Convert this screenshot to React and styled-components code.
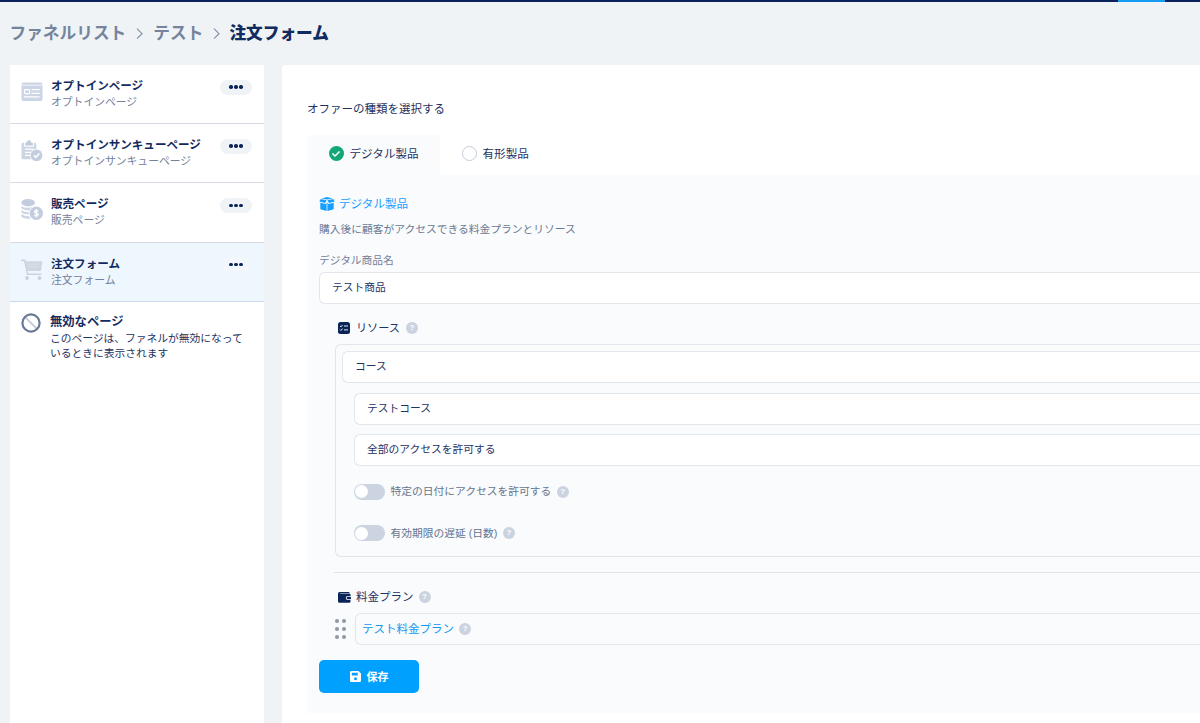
import React from 'react';
import styled, { createGlobalStyle } from 'styled-components';
import { FaCheck } from 'react-icons/fa';

const pages = [
  { title: 'オプトインページ', sub: 'オプトインページ', icon: 'optin' },
  {
    title: 'オプトインサンキューページ',
    sub: 'オプトインサンキューページ',
    icon: 'thanks',
  },
  { title: '販売ページ', sub: '販売ページ', icon: 'sales' },
  { title: '注文フォーム', sub: '注文フォーム', icon: 'cart', active: true },
];

const PageIcon = ({ type }) => {
  if (type === 'optin') {
    return (
      <svg width='22' height='22' viewBox='0 0 22 22'>
        <path d='M0.5 4.700V4.500a2 2 0 0 1 2-2h17a2 2 0 0 1 2 2v.2z' fill='#ccd5e5' />
        <path
          d='M0.5 5.500h21V19a2 2 0 0 1-2 2h-17a2 2 0 0 1-2-2z'
          fill='#ccd5e5'
        />
        <rect x='3.600' y='9.600' width='5' height='4' rx='.8' fill='none' stroke='#fff' strokeWidth='1.300' />
        <path
          d='M11 9.700h7.200M11 13.300h7.200M3.400 16.800h14.800'
          stroke='#fff'
          strokeWidth='1.200'
          strokeLinecap='round'
        />
      </svg>
    );
  }
  if (type === 'thanks') {
    return (
      <svg width='22' height='22' viewBox='0 0 22 22'>
        <path
          d='M.5 5.300a1.500 1.500 0 0 1 1.500-1.500h1v2.800a1.200 1.200 0 0 0 1.200 1.200h7.600A1.200 1.200 0 0 0 13 6.600V3.800h.8a1.500 1.500 0 0 1 1.500 1.500V10l-5 5 1 5.300H2a1.500 1.500 0 0 1-1.500-1.500z'
          fill='#ccd5e4'
        />
        <path
          d='M4.200 6.600V4.400a1 1 0 0 1 1-1h.7a2.100 2.100 0 0 1 4.200 0h.7a1 1 0 0 1 1 1v2.200z'
          fill='#bfcadd'
        />
        <path d='M4 10.200h8.500M4 13.300h5.500M4 16.400h5' stroke='#fff' strokeWidth='1.200' />
        <circle cx='15.500' cy='16.300' r='6.600' fill='#fff' />
        <circle cx='15.500' cy='16.300' r='5.900' fill='#c3cddf' />
        <path d='M12.900 16.400l1.900 1.900 3.500-3.800' fill='none' stroke='#fff' strokeWidth='1.500' />
      </svg>
    );
  }
  if (type === 'sales') {
    return (
      <svg width='22' height='22' viewBox='0 0 22 22'>
        <ellipse cx='7.200' cy='4.700' rx='6.800' ry='3.700' fill='#c3cddf' />
        <path
          d='M.4 8c2 2 8 2.500 11.500.800l-3 3.600C5 12.500 1.500 11.500.4 10.200zM.4 12c2 1.700 4.800 2.200 7.700 2.200v2.400C4.500 16.500 1.500 15.700.4 14.300zM.4 16c2 1.700 4.800 2.200 7.900 2.200l1.200 2.600C5 21.100 1.500 20 .4 18.400z'
          fill='#cdd6e5'
        />
        <circle cx='15.300' cy='15.300' r='7.500' fill='#fff' />
        <circle cx='15.300' cy='15.300' r='6.700' fill='#c3cddf' />
        <path
          d='M17.200 13.600c-.7-1.200-3.700-1.300-3.700.2 0 1.800 3.700 1 3.700 2.800 0 1.600-3 1.500-3.800.3M15.300 11.100v8.400'
          fill='none'
          stroke='#fff'
          strokeWidth='1.300'
        />
      </svg>
    );
  }
  return (
    <svg width='22' height='22' viewBox='0 0 22 22'>
      <path d='M4.300 3.300h17.200l-1.500 9.700H6.300z' fill='#cfd7e1' />
      <path d='M7 6.200h11M7.500 8.800h10' stroke='#dde5ee' strokeWidth='.7' />
      <path
        d='M.7 2.400h3l2.800 13.800h13.500'
        fill='none'
        stroke='#cbd3df'
        strokeWidth='1.600'
        strokeLinecap='round'
      />
      <circle cx='6' cy='20' r='1.900' fill='#c9d1dd' />
      <circle cx='18.500' cy='20' r='1.900' fill='#c9d1dd' />
    </svg>
  );
};

const Chevron = () => (
  <svg width='8' height='12' viewBox='0 0 8 12'>
    <path d='M1 .7l5 5-5 5' fill='none' stroke='#8592aa' strokeWidth='1.200' />
  </svg>
);

const BoxIcon = () => (
  <svg width='16' height='14' viewBox='0 0 16 14'>
    <path
      d='M2.600 1.400L8 0l5.400 1.400L8 2.500zM1.800 1.900L7.600 3.300 6 6 .3 4.500zM14.200 1.900L8.400 3.300 10 6l5.700-1.500z'
      fill='#179fff'
    />
    <path
      d='M1.300 5.700l5.300 1.400 1-1.700V14l-5.500-1.500a1 1 0 0 1-.8-1zM14.700 5.700L9.400 7.100l-1-1.700V14l5.500-1.500a1 1 0 0 0 .8-1z'
      fill='#179fff'
    />
  </svg>
);

const ChecklistIcon = () => (
  <svg width='12' height='12' viewBox='0 0 12 12'>
    <rect width='12' height='12' rx='2.500' fill='#0b2458' />
    <path
      d='M2 4l.9.9 1.600-1.900M2 7.600l.9.900 1.600-1.900M6 4h4M6 7.900h4'
      fill='none'
      stroke='#fff'
      strokeWidth='.9'
    />
  </svg>
);

const WalletIcon = () => (
  <svg width='13' height='12' viewBox='0 0 13 12'>
    <path
      d='M1.800 1h8.900a.9.900 0 0 1 .9.900H2v.5h9.500A1.300 1.300 0 0 1 12.500 3.700v1.300H9.800a1.900 1.900 0 0 0 0 4h2.700v1.500a1.300 1.300 0 0 1-1.300 1.300H1.500A1.500 1.500 0 0 1 0 10.300V2.700A1.700 1.700 0 0 1 1.800 1z'
      fill='#0b2458'
    />
    <path d='M12.900 5.700H10a1.300 1.300 0 0 0 0 2.600h2.900z' fill='#0b2458' />
  </svg>
);

const SaveIcon = () => (
  <svg width='11' height='11' viewBox='0 0 11 11'>
    <path
      d='M1.300 0h7.200L11 2.500v7.200A1.300 1.300 0 0 1 9.700 11H1.300A1.300 1.300 0 0 1 0 9.700V1.300A1.300 1.300 0 0 1 1.300 0zM1.800 1.800v2.800h6V1.800zM5.500 6.200a1.500 1.500 0 1 0 0 3 1.500 1.500 0 0 0 0-3z'
      fill='#fff'
      fillRule='evenodd'
    />
  </svg>
);

const App = () => {
  const [offer, setOffer] = React.useState('digital');
  const [dateAccess, setDateAccess] = React.useState(false);
  const [expireDelay, setExpireDelay] = React.useState(false);

  return (
    <Wrap>
      <GlobalStyle />
      <TopBar>
        <TopActive />
      </TopBar>
      <Breadcrumb>
        <span>ファネルリスト</span>
        <Chevron />
        <span>テスト</span>
        <Chevron />
        <strong>注文フォーム</strong>
      </Breadcrumb>
      <Body>
        <Sidebar>
          {pages.map((page) => (
            <PageItem key={page.title} $active={page.active}>
              <PageIcon type={page.icon} />
              <PageText>
                <PageTitle>{page.title}</PageTitle>
                <PageSub>{page.sub}</PageSub>
              </PageText>
              <MoreButton $active={page.active}>
                <i />
                <i />
                <i />
              </MoreButton>
            </PageItem>
          ))}
          <DisabledItem>
            <svg width='20' height='20' viewBox='0 0 20 20'>
              <path d='M4 4l12 12' stroke='#c8cfdb' strokeWidth='2' />
              <circle cx='10' cy='10' r='8.600' fill='none' stroke='#697a96' strokeWidth='2.200' />
            </svg>
            <div>
              <DisabledTitle>無効なページ</DisabledTitle>
              <DisabledText>
                このページは、ファネルが無効になって
                <br />
                いるときに表示されます
              </DisabledText>
            </div>
          </DisabledItem>
        </Sidebar>

        <Main>
          <Heading>オファーの種類を選択する</Heading>
          <Tabs>
            <Tab $active={offer === 'digital'} onClick={() => setOffer('digital')}>
              <Radio $on={offer === 'digital'}>
                {offer === 'digital' && <FaCheck />}
              </Radio>
              <TabText>デジタル製品</TabText>
            </Tab>
            <Tab $active={offer === 'physical'} onClick={() => setOffer('physical')}>
              <Radio $on={offer === 'physical'}>
                {offer === 'physical' && <FaCheck />}
              </Radio>
              <TabText>有形製品</TabText>
            </Tab>
          </Tabs>
          <Panel>
            <PanelTitle>
              <BoxIcon />
              デジタル製品
            </PanelTitle>
            <Description>
              購入後に顧客がアクセスできる料金プランとリソース
            </Description>
            <Label>デジタル商品名</Label>
            <Field>テスト商品</Field>

            <SectionTitle>
              <ChecklistIcon />
              <SectionName>リソース</SectionName>
              <Help>?</Help>
            </SectionTitle>
            <ResourceBox>
              <Field>コース</Field>
              <Nested>
                <Field>テストコース</Field>
                <Field>全部のアクセスを許可する</Field>
                <ToggleRow>
                  <Switch $on={dateAccess} onClick={() => setDateAccess(!dateAccess)} />
                  <ToggleText>特定の日付にアクセスを許可する</ToggleText>
                  <Help>?</Help>
                </ToggleRow>
                <ToggleRow>
                  <Switch $on={expireDelay} onClick={() => setExpireDelay(!expireDelay)} />
                  <ToggleText>有効期限の遅延 (日数)</ToggleText>
                  <Help>?</Help>
                </ToggleRow>
              </Nested>
            </ResourceBox>

            <Divider />
            <PlanTitle>
              <WalletIcon />
              <SectionName>料金プラン</SectionName>
              <Help>?</Help>
            </PlanTitle>
            <PlanRow>
              <Handle>
                <i />
                <i />
                <i />
                <i />
                <i />
                <i />
              </Handle>
              <PlanField>
                <SectionName>テスト料金プラン</SectionName>
                <Help>?</Help>
              </PlanField>
            </PlanRow>
            <SaveButton>
              <SaveIcon />
              <SectionName>保存</SectionName>
            </SaveButton>
          </Panel>
        </Main>
      </Body>
    </Wrap>
  );
};

const GlobalStyle = createGlobalStyle`
  * {
    box-sizing: border-box;
  }
  body {
    margin: 0;
    overflow: hidden;
    font-family: 'Liberation Sans', 'Noto Sans CJK JP', sans-serif;
    color: #1d3263;
  }
  button {
    border: none;
    padding: 0;
    font-family: inherit;
    cursor: pointer;
  }
  svg {
    flex-shrink: 0;
  }
`;

const Wrap = styled.div`
  display: flex;
  flex-direction: column;
  height: 723px;
  overflow: hidden;
  background: #eff3f6;
`;

const TopBar = styled.div`
  display: flex;
  justify-content: flex-end;
  flex-shrink: 0;
  height: 2px;
  padding-right: 35px;
  background: #0a2259;
`;

const TopActive = styled.div`
  width: 47px;
  background: #159cf5;
`;

const Breadcrumb = styled.div`
  display: flex;
  align-items: center;
  flex-shrink: 0;
  gap: 9.500px;
  height: 63px;
  padding: 0 0 3px 9.500px;
  font-size: 16.700px;
  font-weight: 700;
  color: #75849d;

  svg {
    margin-top: 3px;
  }
  strong {
    margin-left: -1px;
    color: #112a60;
  }
`;

const Body = styled.div`
  display: flex;
  flex: 1;
  gap: 18px;
  padding-left: 10px;
`;

const Sidebar = styled.div`
  width: 254px;
  flex-shrink: 0;
  background: #fff;
`;

const PageItem = styled.div`
  display: flex;
  align-items: flex-start;
  height: 59.200px;
  padding: 15px 12px 0 11px;
  border-bottom: 1px solid ${(props) => (props.$active ? '#cbd8ea' : '#d5dae3')};
  background: ${(props) => (props.$active ? '#eff7fe' : '#fff')};
`;

const PageText = styled.div`
  flex: 1;
  margin: -2px 0 0 8px;
  white-space: nowrap;
`;

const PageTitle = styled.div`
  line-height: 17px;
  font-size: 11.550px;
  font-weight: 700;
  color: #112a60;
`;

const PageSub = styled.div`
  line-height: 15px;
  font-size: 10.800px;
  color: #75809a;
`;

const MoreButton = styled.button`
  display: flex;
  align-items: center;
  justify-content: center;
  gap: 1.500px;
  width: 32px;
  height: 15px;
  margin-top: -0.500px;
  border-radius: 8px;
  background: ${(props) => (props.$active ? '#f1f7fc' : '#eff3f6')};

  i {
    width: 3.500px;
    height: 3.500px;
    border-radius: 50%;
    background: #0b2458;
  }
`;

const DisabledItem = styled.div`
  display: flex;
  gap: 9px;
  padding: 11px 0 0 11px;
`;

const DisabledTitle = styled.div`
  padding-top: 1px;
  line-height: 17px;
  font-size: 12.300px;
  font-weight: 700;
  color: #112a60;
`;

const DisabledText = styled.div`
  line-height: 15px;
  font-size: 10.750px;
  white-space: nowrap;
`;

const Main = styled.div`
  flex: 1;
  min-width: 0;
  padding: 35px 0 0 25px;
  background: #fff;
  border-top-left-radius: 3px;
`;

const Heading = styled.div`
  height: 35px;
  line-height: 19px;
  font-size: 11.500px;
`;

const Tabs = styled.div`
  display: flex;
  height: 40px;
`;

const Tab = styled.div`
  display: flex;
  align-items: center;
  gap: 6px;
  padding: 0 21.500px 3px;
  border-radius: 4px 4px 0 0;
  font-size: 11.550px;
  background: ${(props) => (props.$active ? '#f9fbfc' : '#fff')};
  cursor: pointer;
`;

const TabText = styled.span`
  padding-bottom: 2px;
`;

const Radio = styled.span`
  display: flex;
  align-items: center;
  justify-content: center;
  width: 15px;
  height: 15px;
  border-radius: 50%;
  border: ${(props) => (props.$on ? 'none' : '1px solid #c3ccda')};
  background: ${(props) => (props.$on ? '#12a875' : '#fff')};
  color: #fff;
  font-size: 8px;
`;

const Panel = styled.div`
  height: 538px;
  padding: 17px 0 0 12px;
  background: #f9fbfc;
`;

const PanelTitle = styled.div`
  display: flex;
  align-items: center;
  gap: 4px;
  height: 22px;
  font-size: 11.550px;
  color: #179fff;

  svg {
    margin-top: 2px;
  }
`;

const Description = styled.div`
  margin-top: 5px;
  height: 20px;
  line-height: 20px;
  font-size: 10.750px;
  color: #6b7893;
`;

const Label = styled.div`
  margin: 14px 0 5px;
  height: 14px;
  line-height: 14px;
  font-size: 10.700px;
  color: #75809a;
`;

const Field = styled.div`
  display: flex;
  align-items: center;
  height: 32px;
  padding: 0 0 3px 12px;
  border: 1px solid #e2e7ec;
  border-right: none;
  border-radius: 6px 0 0 6px;
  background: #fff;
  font-size: 10.750px;
`;

const SectionTitle = styled.div`
  display: flex;
  align-items: center;
  gap: 6px;
  height: 20px;
  margin: 14px 0 6px 19px;
  font-size: 11.100px;
`;

const SectionName = styled.span`
  padding-bottom: 2px;
`;

const Help = styled.span`
  display: flex;
  align-items: center;
  justify-content: center;
  width: 12px;
  height: 12px;
  border-radius: 50%;
  background: #cbd3e0;
  color: #fff;
  font-size: 8px;
  font-weight: 700;
  line-height: 12px;
`;

const ResourceBox = styled.div`
  height: 213px;
  margin-left: 16px;
  padding: 6px 0 0 6px;
  border: 1px solid #e0e5eb;
  border-right: none;
  border-radius: 6px 0 0 6px;
`;

const Nested = styled.div`
  display: flex;
  flex-direction: column;
  gap: 9.500px;
  padding: 9.500px 0 0 12px;
`;

const ToggleRow = styled.div`
  display: flex;
  align-items: center;
  height: 32px;
  gap: 5.500px;
  font-size: 10.750px;
  color: #66748f;
`;

const ToggleText = styled.span`
  padding-bottom: 2px;
`;

const Switch = styled.button`
  display: flex;
  align-items: center;
  justify-content: ${(props) => (props.$on ? 'flex-end' : 'flex-start')};
  width: 31px;
  height: 16px;
  padding: 0 1px;
  border-radius: 8px;
  background: ${(props) => (props.$on ? '#00a0ff' : '#ccd4e1')};

  &::after {
    content: '';
    width: 13px;
    height: 13px;
    border-radius: 50%;
    background: #fff;
  }
`;

const Divider = styled.div`
  height: 1px;
  margin: 15px 0 0 15px;
  background: #e0e4ea;
`;

const PlanTitle = styled(SectionTitle)`
  gap: 5px;
  margin: 14px 0 6px 19px;
  font-size: 11.500px;
`;

const PlanRow = styled.div`
  display: flex;
  align-items: center;
  gap: 9px;
  padding-left: 15.500px;
`;

const Handle = styled.div`
  display: grid;
  grid-template-columns: 4px 4px;
  gap: 3.600px;

  i {
    width: 4px;
    height: 4px;
    border-radius: 50%;
    background: #8e98a0;
  }
`;

const PlanField = styled(Field)`
  flex: 1;
  gap: 5px;
  padding: 0 0 0 6px;
  background: #f9fbfc;
  color: #1298f0;
  font-size: 11.500px;
`;

const SaveButton = styled.button`
  display: flex;
  align-items: center;
  justify-content: center;
  gap: 6px;
  width: 100px;
  height: 33px;
  margin-top: 15px;
  border-radius: 5px;
  background: #00a0ff;
  color: #fff;
  font-size: 11px;
  font-weight: 700;
`;

export default App;
